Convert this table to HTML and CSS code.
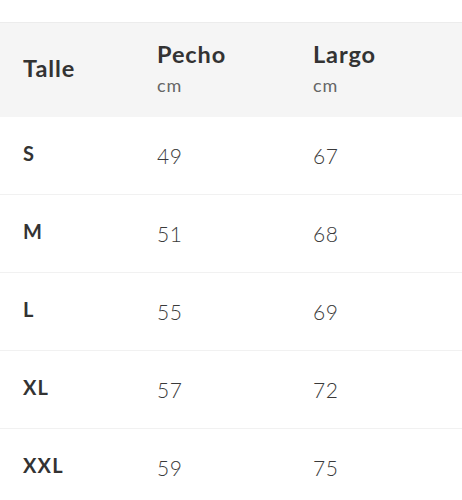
FILE: index.html
```html
<!DOCTYPE html>
<html lang="es">
<head>
<meta charset="utf-8">
<title>Tabla de talles</title>
<link rel="stylesheet" href="styles.css">
</head>
<body>
<div class="spacer"></div>
<div class="table">
  <div class="head">
    <div class="cell c1"><span class="h-title">Talle</span></div>
    <div class="cell c2"><span class="h-title">Pecho</span><span class="unit">cm</span></div>
    <div class="cell c3"><span class="h-title">Largo</span><span class="unit">cm</span></div>
  </div>
  <div class="row">
    <div class="cell c1"><span class="size">S</span></div>
    <div class="cell c2"><span class="num">49</span></div>
    <div class="cell c3"><span class="num">67</span></div>
  </div>
  <div class="row">
    <div class="cell c1"><span class="size">M</span></div>
    <div class="cell c2"><span class="num">51</span></div>
    <div class="cell c3"><span class="num">68</span></div>
  </div>
  <div class="row">
    <div class="cell c1"><span class="size">L</span></div>
    <div class="cell c2"><span class="num">55</span></div>
    <div class="cell c3"><span class="num">69</span></div>
  </div>
  <div class="row">
    <div class="cell c1"><span class="size">XL</span></div>
    <div class="cell c2"><span class="num">57</span></div>
    <div class="cell c3"><span class="num">72</span></div>
  </div>
  <div class="row">
    <div class="cell c1"><span class="size">XXL</span></div>
    <div class="cell c2"><span class="num">59</span></div>
    <div class="cell c3"><span class="num">75</span></div>
  </div>
</div>
</body>
</html>
```
FILE: styles.css
```css
* { box-sizing: border-box; }
html, body {
  margin: 0;
  padding: 0;
  background: #ffffff;
}
body {
  font-family: Lato, "Liberation Sans", sans-serif;
  color: #333333;
  width: 462px;
  overflow: hidden;
}
.spacer { height: 22px; }
.table {
  border-top: 1px solid #ececec;
}
.head {
  display: flex;
  align-items: center;
  height: 94px;
  padding-bottom: 5px;
  background: #f5f5f5;
}
.row {
  display: flex;
  align-items: center;
  height: 78px;
  border-bottom: 1px solid #f1f1f1;
}
.cell {
  display: flex;
  flex-direction: column;
}
.c1 { width: 157px; padding-left: 23px; }
.c2 { width: 156px; }
.c3 { flex: 1; }
.h-title {
  font-size: 23.5px;
  line-height: 28px;
  font-weight: 700;
  letter-spacing: 0.9px;
  color: #333333;
}
.unit {
  margin-top: 7px;
  font-size: 18px;
  line-height: 21px;
  font-weight: 400;
  letter-spacing: 0.8px;
  color: #666666;
}
.size {
  font-size: 20px;
  line-height: 24px;
  font-weight: 700;
  letter-spacing: 1.2px;
  color: #333333;
  margin-bottom: 6px;
}
.num {
  font-size: 21px;
  line-height: 24px;
  font-weight: 300;
  letter-spacing: 0.6px;
  color: #3a3a3a;
}
```
